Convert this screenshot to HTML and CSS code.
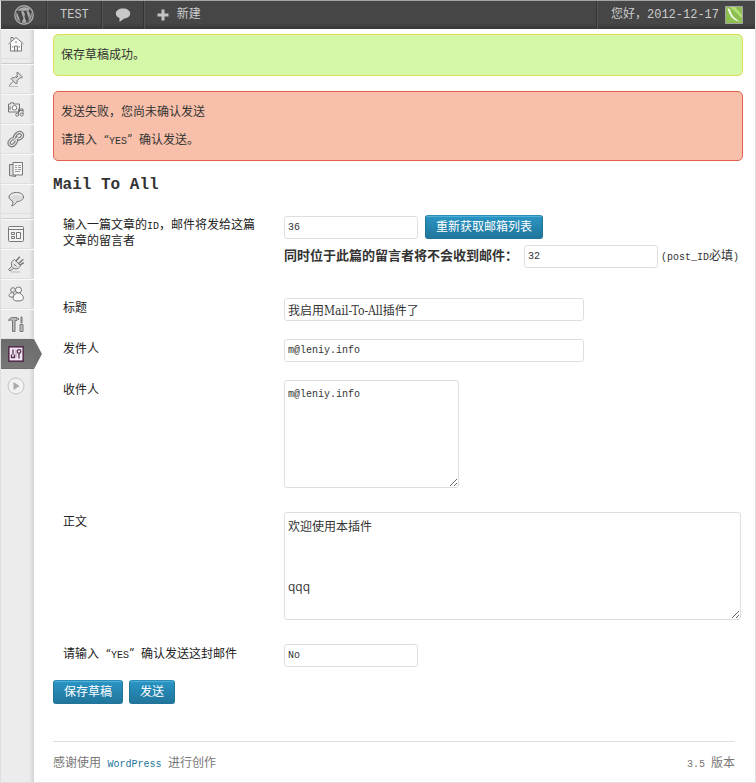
FILE: index.html
```html
<!DOCTYPE html>
<html lang="zh-CN">
<head>
<meta charset="utf-8">
<meta name="viewport" content="width=device-width, initial-scale=1">
<title>Mail To All</title>
<link rel="stylesheet" href="styles.css">
</head>
<body>
<header class="bar">
  <a class="bar-item logo" href="#" aria-label="WordPress">
    <svg width="20" height="20" viewBox="0 0 20 20"><circle cx="10" cy="10" r="9.2" fill="none" stroke="#aaa" stroke-width="1.4"/><path fill="#aaa" d="M10 2.2a7.8 7.8 0 0 0-6.5 3.5h1.9l2.7 0v.8l-1 .1 2.5 7.4 1.4-4.2-1.1-3.2-.9-.1v-.8h4.5v.8l-1 .1 2.4 7.3 1-3.300c.7-2.400-1.200-3.100-1.200-4.700 0-1 .6-1.700 1.400-1.800A7.800 7.800 0 0 0 10 2.200zM2.900 6.900A7.800 7.800 0 0 0 6.600 17zM10.200 10.800 7.900 17.500a7.800 7.800 0 0 0 4.700-.1zM17.100 6.800c.1 1.600-.3 2.600-.7 3.900L14.100 16.600A7.800 7.800 0 0 0 17.100 6.800z"/></svg>
  </a>
  <a class="bar-item" href="#">TEST</a>
  <a class="bar-item" href="#" aria-label="评论">
    <svg width="16" height="16" viewBox="0 0 16 16"><path fill="#c8c8c8" d="M8 1.500c4.200 0 7.200 2.100 7.200 5s-2.500 4.600-6 5L4.500 15v-4C2.300 10.200.8 8.600.8 6.500c0-2.900 3-5 7.200-5z"/></svg>
  </a>
  <a class="bar-item new" href="#">
    <svg width="12" height="12" viewBox="0 0 12 12"><path fill="#c4c4c4" d="M4.500.5h3v4h4v3h-4v4h-3v-4h-4v-3h4z"/></svg>
    <span class="han">新建</span>
  </a>
  <a class="bar-item account" href="#">
    <span><span class="han">您好，</span>2012-12-17</span>
    <svg width="18" height="18" viewBox="0 0 18 18"><path fill="#8cbf50" stroke="#a4a4a4" d="M.5.5h17v17H.5z"/><path fill="#b5df78" d="M1 1h9l7 8v3L5 1z"/><path fill="#f6fbe9" d="M2.500 2C4 9 8 15 15 15.500 10 13 6 9 5.200 3.500z"/></svg>
  </a>
</header>
<div class="page">
  <nav class="menu" aria-label="管理菜单">
    <a href="#" aria-label="仪表盘"><svg viewBox="0 0 18 18"><path d="M3.500 8.500v7.500h11V8.500M1.500 9 9 2.500 16.500 9M4 6V2.500h2V4M7.500 16v-5h3v5" fill="#fff"/><path d="M5 12h1.500m5 0H13M9 6v2"/></svg></a>
    <i class="sep"></i>
    <a href="#" aria-label="文章"><svg viewBox="0 0 18 18"><path fill="#ddd" d="m10.500 2 5 5-1 1-1.500-.3-3 3 .2 2.300-1 1L4 8.700l1-1 2.500.2 3-3L9.700 3z"/><path d="M6.300 11.300 2 15.800M9 8l2-2"/><path stroke="#bbb" d="M2 16.500h9"/></svg></a>
    <a href="#" aria-label="多媒体"><svg viewBox="0 0 18 18"><path fill="#eee" d="M1.500 4h2V2.800h3V4h6v8h-11z"/><circle cx="7.500" cy="7.800" r="2.300" fill="#fff"/><path d="M3 6v4M11.500 14.500V9h4.500v5M11.500 10.500H16"/><circle cx="10.200" cy="14.700" r="1.500"/><circle cx="14.700" cy="14.500" r="1.500"/></svg></a>
    <a href="#" aria-label="链接"><svg viewBox="0 0 18 18"><path stroke-width="3.400" d="M8 8.200C6 6.500 11.500.6 14.500 3.200S13 10.200 10.500 8.500M9 9.500c2 1.500-3 8-6 5.500S5 7.500 7.500 9M7 11l4-4"/><path stroke="#e4e4e4" stroke-width="1.200" d="M8 8.200C6 6.500 11.500.6 14.500 3.200S13 10.200 10.500 8.500M9 9.500c2 1.500-3 8-6 5.500S5 7.500 7.500 9M7 11l4-4"/></svg></a>
    <a href="#" aria-label="页面"><svg viewBox="0 0 18 18"><path fill="#ddd" d="M2.500 4.500h6v12l-6-1z"/><path fill="#f6f6f6" d="M6 2.500h9.500v12.500H6z"/><path stroke="#999" d="M8 5.500h2m1 0h3M8 7.500h2m1 0h3M8 9.500h2m1 0h3M8 11.500h5"/></svg></a>
    <a href="#" aria-label="评论"><svg viewBox="0 0 18 18"><path fill="#dcdcdc" d="M9.500 2.500c4 0 7 1.800 7 4.500s-3 4.500-6.500 4.500c-1 2-3 4-5.500 4.500 1.500-1.500 1.500-3 1-5C3.500 10 2 8.800 2 7c0-2.700 3.500-4.500 7.500-4.500z"/><path stroke="#fff" d="M4.500 6.500c1-2 3-2.500 5-2.500s4 .5 5 2"/></svg></a>
    <i class="sep"></i>
    <a href="#" aria-label="外观"><svg viewBox="0 0 18 18"><rect x="1.500" y="1.500" width="15" height="15" rx="1" fill="#f4f4f4"/><path d="M2 4.500h14M4.500 7.500h3v2h-3zM4.500 11.500h3v2h-3zM9.500 7.500h4v6h-4z"/></svg></a>
    <a href="#" aria-label="插件"><svg viewBox="0 0 18 18"><path fill="#e4e4e4" d="M7.500 4.500 13.500 10.500c-1 2.500-3.500 4-6.500 3-1.500-1-2.500-2-2.500-3.500C4 7.500 5.500 5.500 7.500 4.500z"/><path stroke-width="1.500" d="m8.800 6.200 4-4.500m-1.500 7 5-4.500m-3.500 6 4-2.500"/><path fill="#ddd" d="m4.500 11.500-3 3 1.500 1.500 3.500-2.500"/><path d="M7 9l2.500 2.500"/><path stroke="#bbb" d="M4 17h9"/></svg></a>
    <a href="#" aria-label="用户"><svg viewBox="0 0 18 18"><circle cx="6" cy="5" r="2.300" fill="#eee"/><path fill="#eee" d="M6 7.500c-2.500 0-4 1.500-4 3.200 0 1 1.300 1.300 3 1.300h3z"/><circle cx="11.500" cy="5" r="3" fill="#f6f6f6"/><path fill="#f6f6f6" d="M9.500 8c-2 1-3.500 3.500-3.500 5.500C6 15 8 16 11 16s5.500-1 5.500-2.500c0-2.500-2-4.500-4-5.500z"/></svg></a>
    <a href="#" aria-label="工具"><svg viewBox="0 0 18 18"><path fill="#bbb" d="M1.500 5.500C2 3.500 4 2.500 6 2.500h4v3H8v11H5.500v-11C4 5 2.500 5 1.500 5.500zM14 2v6h1V2zM13 9.500h3v7h-3z"/><path d="M11.500 3v2"/></svg></a>
    <a class="current" href="#" aria-label="设置" aria-current="page"><svg viewBox="0 0 18 18"><rect x="1.800" y="1.800" width="14.400" height="14.400" fill="#f4e6f2" stroke="#55304f" stroke-width="1.600"/><path stroke="#55304f" stroke-width="1.300" d="M6 4.500v5M4.500 9.500v3h3v-3M12 8.500v5"/><circle cx="12" cy="6.500" r="1.800" stroke="#55304f" stroke-width="1.300"/><path stroke="#b594b0" d="M9 4.500v8"/></svg></a>
    <button class="collapse" type="button" aria-label="收起菜单"><svg viewBox="0 0 18 18"><circle cx="9" cy="9" r="8" fill="#f2f2f2" stroke="#c3c3c3"/><path fill="#aaa" stroke="none" d="m6.500 5 6 4-6 4z"/></svg></button>
  </nav>
  <main class="content">
    <div class="notice ok"><p>保存草稿成功。</p></div>
    <div class="notice error"><p>发送失败，您尚未确认发送</p><p>请填入<span class="q open">“</span><span class="lat">YES</span><span class="q">”</span>确认发送。</p></div>
    <h1>Mail To All</h1>
    <form>
      <div class="fields">
        <label for="post">输入一篇文章的<span class="lat">ID</span>，邮件将发给这篇文章的留言者</label>
        <div class="stack">
          <div class="line"><input id="post" class="short lat" type="text" value="36"><button class="btn" type="button">重新获取邮箱列表</button></div>
          <div class="line second"><label class="strong" for="exclude">同时位于此篇的留言者将不会收到邮件：</label><input id="exclude" class="short lat" type="text" value="32"><span class="hint"><span class="lat">(post_ID</span>必填<span class="lat">)</span></span></div>
        </div>
        <label for="title">标题</label>
        <input id="title" class="long" type="text" value="我启用Mail-To-All插件了">
        <label for="from">发件人</label>
        <input id="from" class="long lat" type="text" value="m@leniy.info">
        <label for="to">收件人</label>
        <textarea id="to" class="narrow lat">m@leniy.info</textarea>
        <label for="body">正文</label>
        <textarea id="body" class="wide">欢迎使用本插件


qqq</textarea>
        <label for="confirm">请输入<span class="q open">“</span><span class="lat">YES</span><span class="q">”</span>确认发送这封邮件</label>
        <input id="confirm" class="short lat" type="text" value="No">
      </div>
      <div class="actions"><button class="btn" type="button">保存草稿</button><button class="btn" type="button">发送</button></div>
    </form>
    <footer><span>感谢使用 <a class="lat" href="#">WordPress</a> 进行创作</span><span><span class="lat">3.5 </span>版本</span></footer>
  </main>
</div>
</body>
</html>
```
FILE: styles.css
```css
* { box-sizing: border-box; }
body {
  margin: 0;
  min-height: 100vh;
  display: flex;
  flex-direction: column;
  border: 1px solid #dfdfdf;
  border-top-color: #a2a6a2;
  background: #fff;
  color: #333;
  font: 12px/16px "DejaVu Serif Condensed", "Noto Sans CJK SC", sans-serif;
}
p { margin: 0; }
.lat { font-family: "Liberation Mono", "Noto Sans CJK SC", monospace; font-size: 10px; }
span.lat, a.lat { line-height: 10px; }
.q { display: inline-block; width: 12px; line-height: 12px; }
.q.open { text-align: right; }

.bar {
  display: flex;
  height: 28px;
  background: linear-gradient(#464646 80%, #373737);
  font-family: "Liberation Mono", "Noto Sans CJK SC", monospace;
}
.bar-item {
  display: flex;
  align-items: center;
  padding: 0 12px 0 13px;
  color: #ccc;
  text-decoration: none;
  border-right: 1px solid #333;
  box-shadow: 1px 0 #555;
}
.bar-item.new { gap: 8px; border: 0; box-shadow: none; }
.bar-item.account {
  gap: 6px;
  margin-left: auto;
  border-right: 0;
  border-left: 1px solid #555;
  box-shadow: -1px 0 #333;
}
.page { display: flex; flex: 1; }
.menu {
  flex: none;
  width: 33px;
  background: linear-gradient(90deg, #ececec 85%, #d4d4d4);
}
.menu a {
  display: flex;
  height: 30px;
  padding: 0 6px;
  align-items: center;
  border-top: 1px solid #f9f9f9;
  border-bottom: 1px solid #dfdfdf;
}
.menu svg { width: 18px; height: 18px; fill: none; stroke: #777; }
.sep { display: block; height: 5px; border-bottom: 1px solid #ccc; }
.menu .current {
  position: relative;
  background: linear-gradient(#6b6b6b, #777);
  border-color: #6d6d6d;
}
.current::after {
  content: "";
  position: absolute;
  left: 100%;
  top: -1px;
  border: solid transparent;
  border-width: 15px 0 15px 8px;
  border-left-color: #707070;
}
.collapse { display: block; margin: 8px 6px; padding: 0; border: 0; background: none; height: 18px; }

.content { flex: 1; min-width: 0; padding: 5px 12px 11px 19px; display: flex; flex-direction: column; }
.notice { border: 1px solid; border-radius: 5px; padding: 12px 7px; margin-bottom: 15px; }
.notice p + p { margin-top: 12px; }
.ok { background: #d5f8a8; border-color: #e6db55; }
.error { background: #f8c0aa; border-color: #e0624f; }
h1 {
  margin: 0 0 21px;
  font: bold 16px/18px "Liberation Mono", monospace;
}
.fields {
  display: grid;
  grid-template-columns: 200px minmax(0, 1fr);
  gap: 18px 21px;
  padding-left: 10px;
}
.fields > label { color: #222; padding-top: 2px; }
.stack { margin-bottom: 12px; }
.line { display: flex; align-items: center; gap: 7px; height: 24px; }
.line.second { gap: 3px; margin-top: 5px; }
.strong { font-weight: bold; font-size: 13px; margin-right: 3px; white-space: nowrap; }
.hint { white-space: nowrap; }
input, textarea {
  display: block;
  margin: 0;
  padding: 3px;
  border: 1px solid #dfdfdf;
  border-radius: 3px;
  background: #fff;
  color: #333;
  font-family: inherit;
  font-size: 12px;
  line-height: 15px;
}
input { height: 23px; }
textarea { height: 108px; padding-top: 4px; line-height: 20px; margin-bottom: 6px; max-width: 100%; }
.short { width: 134px; }
.long { width: 300px; }
.narrow { width: 175px; }
.wide { width: 457px; font-family: "Open Sans", "Noto Sans CJK SC", sans-serif; }
.btn {
  height: 24px;
  padding: 0 10px;
  border: 1px solid #21759b;
  border-top-color: #298cba;
  border-radius: 3px;
  background: linear-gradient(#2a95c5, #21759b);
  box-shadow: inset 0 1px rgba(120, 200, 230, 0.5);
  color: #fff;
  font-family: inherit;
  font-size: 12px;
  line-height: 16px;
}
.actions { display: flex; gap: 6px; margin-top: 13px; }
footer {
  display: flex;
  justify-content: space-between;
  margin-top: auto;
  margin-right: 8px;
  padding-top: 13px;
  border-top: 1px solid #dfdfdf;
  color: #777;
}
footer a { color: #21759b; text-decoration: none; margin: 0 3px; }
```
